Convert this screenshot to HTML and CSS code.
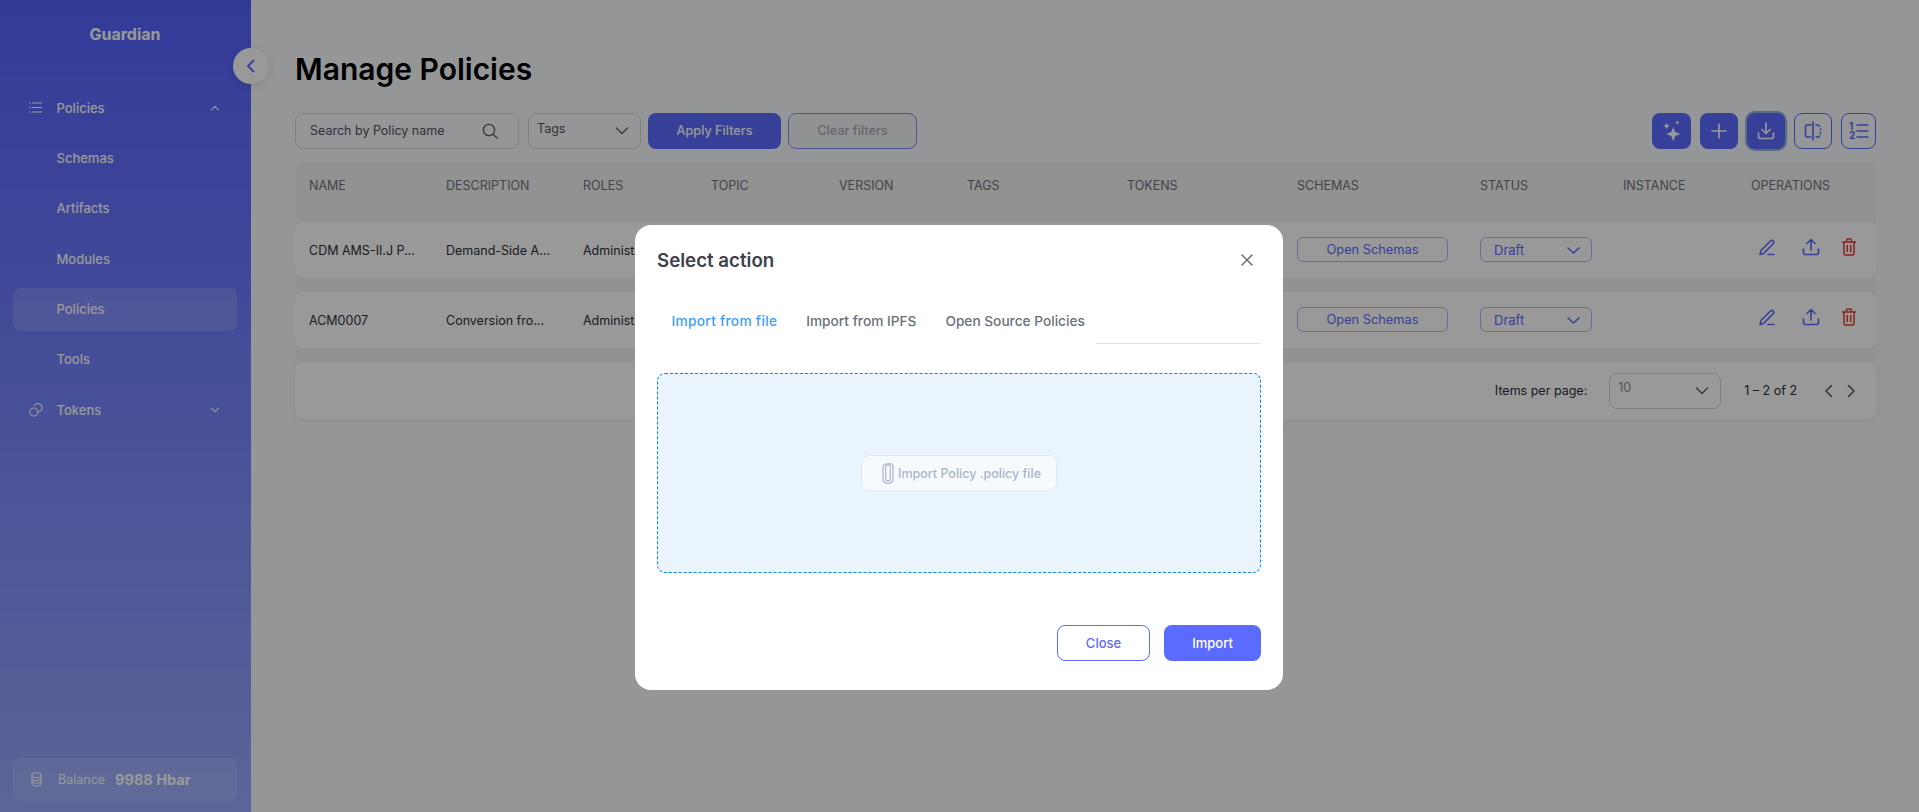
FILE: index.html
```html
<!DOCTYPE html>
<html lang="en">
<head>
    <meta charset="UTF-8">
    <meta name="viewport" content="width=device-width, initial-scale=1.0">
    <title>Guardian - Manage Policies</title>
    <link rel="stylesheet" href="styles.css">
</head>
<body>
    <div class="app">
        <aside class="sidebar">
            <div class="logo">Guardian</div>
            <button class="collapse-btn">
                <svg width="12" height="14" viewBox="0 0 12 14"><path d="M8.500 1.500 3 7l5.500 5.500" class="ic-primary ic-bold"/></svg>
            </button>
            <nav class="nav">
                <div class="nav-item">
                    <svg class="nav-icon" width="13" height="11" viewBox="0 0 13 11"><path d="M3.500 1h9.500M3.500 5.500h9.500M3.500 10h9.500M.3 1h1M.3 5.500h1M.3 10h1" class="ic-line"/></svg>
                    <span>Policies</span>
                    <svg class="nav-caret" width="10" height="6" viewBox="0 0 10 6"><path d="M1.500 4.800 5 1.300l3.500 3.500" class="ic-line"/></svg>
                </div>
                <div class="nav-item">Schemas</div>
                <div class="nav-item">Artifacts</div>
                <div class="nav-item">Modules</div>
                <div class="nav-item active">Policies</div>
                <div class="nav-item">Tools</div>
                <div class="nav-item">
                    <svg class="nav-icon" width="14" height="14" viewBox="0 0 14 14"><circle cx="4.800" cy="9" r="4" class="ic-line"/><path d="M5.500 2.600A4 4 0 0 1 13 4.600a4 4 0 0 1-3 3.900" class="ic-line"/></svg>
                    <span>Tokens</span>
                    <svg class="nav-caret" width="10" height="6" viewBox="0 0 10 6"><path d="M1.500 1.200 5 4.700l3.500-3.500" class="ic-line"/></svg>
                </div>
            </nav>
            <div class="balance">
                <svg width="11" height="15" viewBox="0 0 11 15"><ellipse cx="5.500" cy="3.200" rx="4.500" ry="2.500" class="ic-line"/><path d="M1 3.200v8.300c0 1.400 2 2.500 4.500 2.500s4.500-1.100 4.500-2.500V3.200M1 6c0 1.400 2 2.500 4.500 2.500S10 7.400 10 6M1 8.800c0 1.400 2 2.500 4.500 2.500s4.500-1.100 4.500-2.500" class="ic-line"/></svg>
                <span class="balance-label">Balance</span>
                <span class="balance-value">9988 Hbar</span>
            </div>
        </aside>

        <main class="content">
            <h1 class="page-title">Manage Policies</h1>
            <div class="toolbar">
                <div class="filters">
                    <div class="field search">
                        <span>Search by Policy name</span>
                        <svg width="16" height="16" viewBox="0 0 16 16"><circle cx="7" cy="7" r="5.600" class="ic-muted"/><path d="M11.200 11.200 15 15" class="ic-muted"/></svg>
                    </div>
                    <div class="field tags">
                        <span>Tags</span>
                        <svg width="14" height="8" viewBox="0 0 14 8"><path d="M1.500 1 7 6.500 12.500 1" class="ic-muted"/></svg>
                    </div>
                    <button class="btn btn-primary apply">Apply Filters</button>
                    <button class="btn clear">Clear filters</button>
                </div>
                <div class="actions">
                    <button class="icon-btn solid w39">
                        <svg width="22" height="24" viewBox="0 0 18 20"><path d="M10 6.500l1.600 4.400L16 12.500l-4.400 1.600L10 18.500l-1.600-4.400L4 12.500l4.400-1.600zM4.500 3l.8 2 2 .8-2 .8-.8 2-.8-2-2-.8 2-.8zM13.500 1l.6 1.400 1.400.6-1.400.6-.6 1.400-.6-1.400-1.400-.6 1.400-.6z" class="ic-solid"/></svg>
                    </button>
                    <button class="icon-btn solid">
                        <svg width="16" height="16" viewBox="0 0 16 16"><path d="M8 1v14M1 8h14" class="ic-white"/></svg>
                    </button>
                    <button class="icon-btn solid focused">
                        <svg width="18" height="18" viewBox="0 0 18 18"><path d="M9 1v10M5 7.500l4 4 4-4M1.500 11v3.500a2 2 0 0 0 2 2h11a2 2 0 0 0 2-2V11" class="ic-white"/></svg>
                    </button>
                    <button class="icon-btn outline">
                        <svg width="18" height="20" viewBox="0 0 18 20"><path d="M7 4H3a1.500 1.500 0 0 0-1.500 1.500v9A1.500 1.500 0 0 0 3 16h4M9 1v18" class="ic-primary"/><path d="M12 4h1.500a2 2 0 0 1 2 1.200M16.500 8v1M16.500 11.500v1M15.500 15a2 2 0 0 1-2 1H12" class="ic-primary"/></svg>
                    </button>
                    <button class="icon-btn outline w35">
                        <svg width="20" height="20" viewBox="0 0 20 20"><text x="0" y="9" class="ic-num">1</text><text x="0" y="18" class="ic-num">2</text><path d="M8 4h11M8 10h11M8 16h11" class="ic-primary"/></svg>
                    </button>
                </div>
            </div>

            <div class="table">
                <div class="row head">
                    <div>NAME</div><div>DESCRIPTION</div><div>ROLES</div><div>TOPIC</div><div>VERSION</div><div>TAGS</div><div>TOKENS</div><div>SCHEMAS</div><div>STATUS</div><div>INSTANCE</div><div>OPERATIONS</div>
                </div>
                <div class="row body">
                    <div>CDM AMS-II.J P...</div><div>Demand-Side A...</div><div>Administrator</div><div></div><div></div><div></div><div></div>
                    <div><button class="schemas-btn">Open Schemas</button></div>
                    <div><div class="status">Draft <svg width="13" height="7" viewBox="0 0 13 7"><path d="M1 1l5.500 5L12 1" class="ic-primary"/></svg></div></div>
                    <div></div>
                    <div class="ops">
                        <svg width="18" height="18" viewBox="0 0 18 18"><path d="M3 12.500 12.500 3a1.900 1.900 0 0 1 2.700 2.700L5.500 15.500 2 16.500zM10 16.500h6" class="ic-primary"/></svg>
                        <svg width="18" height="18" viewBox="0 0 18 18"><path d="M9 12V1.500M5 5.500l4-4 4 4M1.500 11v3.500a2 2 0 0 0 2 2h11a2 2 0 0 0 2-2V11" class="ic-primary"/></svg>
                        <svg width="14" height="18" viewBox="0 0 14 18"><path d="M.5 4h13M4.500 4V2a1 1 0 0 1 1-1h3a1 1 0 0 1 1 1v2M2 4v11.500A1.500 1.500 0 0 0 3.500 17h7a1.500 1.500 0 0 0 1.500-1.500V4M5.300 7.500v6M8.700 7.500v6" class="ic-red"/></svg>
                    </div>
                </div>
                <div class="row body">
                    <div>ACM0007</div><div>Conversion fro...</div><div>Administrator</div><div></div><div></div><div></div><div></div>
                    <div><button class="schemas-btn">Open Schemas</button></div>
                    <div><div class="status">Draft <svg width="13" height="7" viewBox="0 0 13 7"><path d="M1 1l5.500 5L12 1" class="ic-primary"/></svg></div></div>
                    <div></div>
                    <div class="ops">
                        <svg width="18" height="18" viewBox="0 0 18 18"><path d="M3 12.500 12.500 3a1.900 1.900 0 0 1 2.700 2.700L5.500 15.500 2 16.500zM10 16.500h6" class="ic-primary"/></svg>
                        <svg width="18" height="18" viewBox="0 0 18 18"><path d="M9 12V1.500M5 5.500l4-4 4 4M1.500 11v3.500a2 2 0 0 0 2 2h11a2 2 0 0 0 2-2V11" class="ic-primary"/></svg>
                        <svg width="14" height="18" viewBox="0 0 14 18"><path d="M.5 4h13M4.500 4V2a1 1 0 0 1 1-1h3a1 1 0 0 1 1 1v2M2 4v11.500A1.500 1.500 0 0 0 3.500 17h7a1.500 1.500 0 0 0 1.500-1.500V4M5.300 7.500v6M8.700 7.500v6" class="ic-red"/></svg>
                    </div>
                </div>
            </div>

            <div class="paginator">
                <span>Items per page:</span>
                <div class="field page-size">
                    <span>10</span>
                    <svg width="14" height="8" viewBox="0 0 14 8"><path d="M1.500 1 7 6.500 12.500 1" class="ic-muted"/></svg>
                </div>
                <span class="range">1 – 2 of 2</span>
                <svg width="9" height="14" viewBox="0 0 9 14"><path d="M7.500 1.500 2 7l5.500 5.500" class="ic-dark"/></svg>
                <svg class="next" width="9" height="14" viewBox="0 0 9 14"><path d="M1.500 1.500 7 7l-5.500 5.500" class="ic-dark"/></svg>
            </div>
        </main>
    </div>

    <div class="backdrop">
        <div class="modal">
            <div class="modal-header">
                <h2>Select action</h2>
                <svg width="12" height="12" viewBox="0 0 12 12"><path d="M1 1l10 10M11 1 1 11" class="ic-close"/></svg>
            </div>
            <div class="tabs">
                <div class="tab active">Import from file</div>
                <div class="tab">Import from IPFS</div>
                <div class="tab">Open Source Policies</div>
                <div class="tabs-rest"></div>
            </div>
            <div class="dropzone">
                <div class="file-chip">
                    <svg width="12" height="21" viewBox="0 0 12 21"><path d="M8.300 5.500v10a2.300 2.300 0 0 1-4.600 0V4.200a2.200 2.200 0 0 1 4.600 0" class="ic-chip"/><path d="M11 4.500v11a5 5 0 0 1-10 0V4.200A3.400 3.400 0 0 1 4.400 1" class="ic-chip"/><path d="M4.400 1h1.800A3.400 3.400 0 0 1 11 4.500" class="ic-chip"/></svg>
                    <span>Import Policy .policy file</span>
                </div>
            </div>
            <div class="modal-footer">
                <button class="btn modal-close">Close</button>
                <button class="btn btn-primary modal-import">Import</button>
            </div>
        </div>
    </div>
</body>
</html>
```

FILE: styles.css
```css
* {
    box-sizing: border-box;
}

body {
    margin: 0;
    font-family: Inter, "Liberation Sans", sans-serif;
    font-size: 12.5px;
    color: #23252e;
    background-color: #f9fafc;
    overflow: hidden;
}

button {
    font-family: inherit;
    cursor: pointer;
}

svg {
    flex: none;
    display: block;
}

svg path, svg circle, svg ellipse {
    fill: none;
    stroke-linecap: round;
    stroke-linejoin: round;
}

.ic-primary { stroke: #5c6bff; stroke-width: 1.6; }
.ic-bold { stroke-width: 2; }
.ic-white { stroke: #fff; stroke-width: 1.6; }
.ic-line { stroke: #fff; stroke-width: 1.1; }
.ic-muted { stroke: #5b6270; stroke-width: 1.4; }
.ic-dark { stroke: #59606e; stroke-width: 1.6; }
.ic-red { stroke: #e8382d; stroke-width: 1.5; }
.ic-close { stroke: #5c6470; stroke-width: 1.4; }
.ic-chip { stroke: #a9b6c6; stroke-width: 1.2; }
svg path.ic-solid { fill: #fff; stroke: none; }
.ic-num { fill: #5c6bff; font-size: 10px; font-weight: 700; }

.app {
    display: flex;
    height: 100vh;
}

/* sidebar */
.sidebar {
    position: relative;
    width: 251px;
    flex: none;
    display: flex;
    flex-direction: column;
    padding: 0 14px 11px 13px;
    color: #fff;
    background: linear-gradient(180deg, #5462ff 0%, #99a9fd 100%);
}

.logo {
    height: 68px;
    line-height: 68px;
    margin-bottom: 18px;
    text-align: center;
    font-size: 16px;
    font-weight: 700;
}

.collapse-btn {
    position: absolute;
    top: 48px;
    right: -18px;
    width: 36px;
    height: 36px;
    display: flex;
    align-items: center;
    justify-content: center;
    padding: 0;
    border: none;
    border-radius: 50%;
    background: #fff;
    box-shadow: 0 2px 8px rgba(0, 0, 0, 0.1);
    z-index: 1;
}

.nav {
    display: flex;
    flex-direction: column;
    gap: 7.4px;
}

.nav-item {
    position: relative;
    height: 43px;
    display: flex;
    align-items: center;
    padding-left: 43.500px;
    border-radius: 8px;
    font-size: 13px;
    font-weight: 500;
}

.nav-item.active {
    background: rgba(255, 255, 255, 0.14);
}

.nav-icon {
    position: absolute;
    left: 16px;
}

.nav-caret {
    position: absolute;
    right: 17px;
}

.balance {
    margin-top: auto;
    height: 43px;
    display: flex;
    align-items: center;
    padding-left: 17px;
    border: 1px solid rgba(255, 255, 255, 0.06);
    border-radius: 8px;
    background: rgba(255, 255, 255, 0.1);
}

.balance-label {
    margin-left: 16px;
    font-size: 12.5px;
}

.balance-value {
    margin-left: 10px;
    font-size: 14.5px;
    font-weight: 700;
}

/* main content */
.content {
    flex: 1;
    min-width: 0;
    padding: 48px 43px 0 44px;
}

.page-title {
    margin: 0 0 23px;
    height: 42px;
    line-height: 42px;
    font-size: 30px;
    font-weight: 600;
    color: #000;
}

.toolbar {
    display: flex;
    justify-content: space-between;
    margin-bottom: 14px;
}

.filters, .actions {
    display: flex;
    height: 36px;
}

.filters {
    gap: 7px;
}

.actions {
    gap: 9px;
}

.field {
    display: flex;
    align-items: center;
    justify-content: space-between;
    height: 36px;
    border: 1px solid #d5d8de;
    border-radius: 8px;
    color: #4d5562;
}

.search {
    width: 224px;
    margin-right: 2px;
    padding: 0 20px 1px 14px;
}

.tags {
    width: 113px;
    padding: 0 11px 6px 8px;
}

.tags svg {
    margin-top: 6px;
}

.btn {
    height: 36px;
    padding: 0 0 1px;
    border-radius: 8px;
    font-size: 13px;
    font-weight: 500;
}

.btn-primary {
    border: none;
    background: #5c6bff;
    color: #fff;
}

.apply {
    width: 133px;
    font-size: 12.7px;
}

.clear {
    width: 129px;
    border: 1px solid #7e8bf5;
    background: #f2f3f7;
    color: #a7acb6;
    font-size: 12.7px;
}

.icon-btn {
    width: 38px;
    height: 36px;
    display: flex;
    align-items: center;
    justify-content: center;
    padding: 0;
    border-radius: 8px;
}

.icon-btn.w39 {
    width: 39px;
}

.icon-btn.w35 {
    width: 35px;
}

.icon-btn.solid {
    border: none;
    background: #5c6bff;
}

.icon-btn.outline {
    border: 1px solid #5c6bff;
    background: transparent;
}

.icon-btn.focused {
    box-shadow: 0 0 0 2px #8fb5dc;
}

/* table */
.table {
    display: flex;
    flex-direction: column;
    gap: 14px;
    padding-bottom: 14px;
    background: #f3f3f3;
    border-radius: 8px 8px 0 0;
}

.row {
    display: grid;
    grid-template-columns: 137px 137px 128px 128px 128px 160px 170px 183px 143px 128px 139px;
    align-items: center;
}

.row > div {
    padding-left: 14px;
    min-width: 0;
    white-space: nowrap;
}

.row.head {
    height: 45px;
    margin-bottom: 0;
    font-size: 12.5px;
    color: #6c7381;
}

.row.body {
    height: 56px;
    background: #fff;
    border-radius: 8px;
    color: #2c2f38;
}

.schemas-btn {
    width: 151px;
    height: 25px;
    margin-top: -1px;
    display: block;
    padding: 0;
    border: 1px solid #b4bbf8;
    border-radius: 6px;
    background: transparent;
    font-size: 12.8px;
    color: #5c6bff;
}

.status {
    width: 112px;
    height: 25px;
    margin-top: -1px;
    display: flex;
    align-items: center;
    justify-content: space-between;
    padding: 1px 11px 0 13px;
    border: 1px solid #b4bbf8;
    border-radius: 6px;
    font-size: 13px;
    color: #5c6bff;
}

.ops {
    display: flex;
    align-items: center;
    gap: 26px;
    margin-top: -6px;
    padding-left: 21px !important;
}

.ops svg:last-child {
    margin-left: -4px;
}

/* paginator */
.paginator {
    height: 57px;
    display: flex;
    align-items: center;
    justify-content: flex-end;
    padding-right: 20px;
    background: #fff;
    border-radius: 8px;
    box-shadow: 0 2px 6px rgba(0, 0, 0, 0.05);
    color: #2c2f38;
}

.page-size {
    width: 112px;
    margin-left: 22px;
    padding: 0 11px 6px 8px;
    color: #8a909c;
}

.page-size svg {
    margin-top: 6px;
}

.range {
    margin: 0 27px 0 23px;
}

.next {
    margin-left: 14px;
}

/* modal */
.backdrop {
    position: fixed;
    inset: 0;
    z-index: 10;
    display: flex;
    align-items: flex-start;
    justify-content: center;
    padding: 225px 1px 0 0;
    background: rgba(0, 0, 0, 0.4);
}

.modal {
    width: 648px;
    height: 465px;
    padding: 0 22px;
    background: #fff;
    border-radius: 16px;
}

.modal-header {
    height: 70px;
    display: flex;
    align-items: center;
    justify-content: space-between;
    padding: 0 8px 0 0;
}

.modal-header h2 {
    margin: 0;
    font-size: 18.7px;
    font-weight: 600;
    color: #3d4149;
}

.tabs {
    height: 49px;
    display: flex;
    align-items: stretch;
}

.tab {
    padding: 3px 14.500px 0;
    display: flex;
    align-items: center;
    font-size: 13.7px;
    font-weight: 500;
    color: #6b6f78;
    white-space: nowrap;
}

.tab.active {
    color: #3b9dfb;
    letter-spacing: 0.3px;
}

.tabs-rest {
    flex: 1;
    margin-left: -3px;
    border-bottom: 1px solid #dfe1e5;
}

.dropzone {
    height: 200px;
    margin-top: 29px;
    display: flex;
    align-items: center;
    justify-content: center;
    border: 1px dashed #0b84ee;
    border-radius: 8px;
    background: #e9f4fd;
}

.file-chip {
    width: 196px;
    height: 36px;
    display: flex;
    align-items: center;
    gap: 4px;
    padding-left: 20px;
    border: 1px solid #e2e8f0;
    border-radius: 8px;
    background: #f7fafd;
    font-weight: 500;
    color: #a9b6c6;
    white-space: nowrap;
}

.modal-footer {
    display: flex;
    justify-content: flex-end;
    gap: 14px;
    margin-top: 52px;
}

.modal-close {
    width: 93px;
    border: 1px solid #5c6bff;
    background: #fff;
    color: #5c6bff;
}

.modal-import {
    width: 97px;
}
```
